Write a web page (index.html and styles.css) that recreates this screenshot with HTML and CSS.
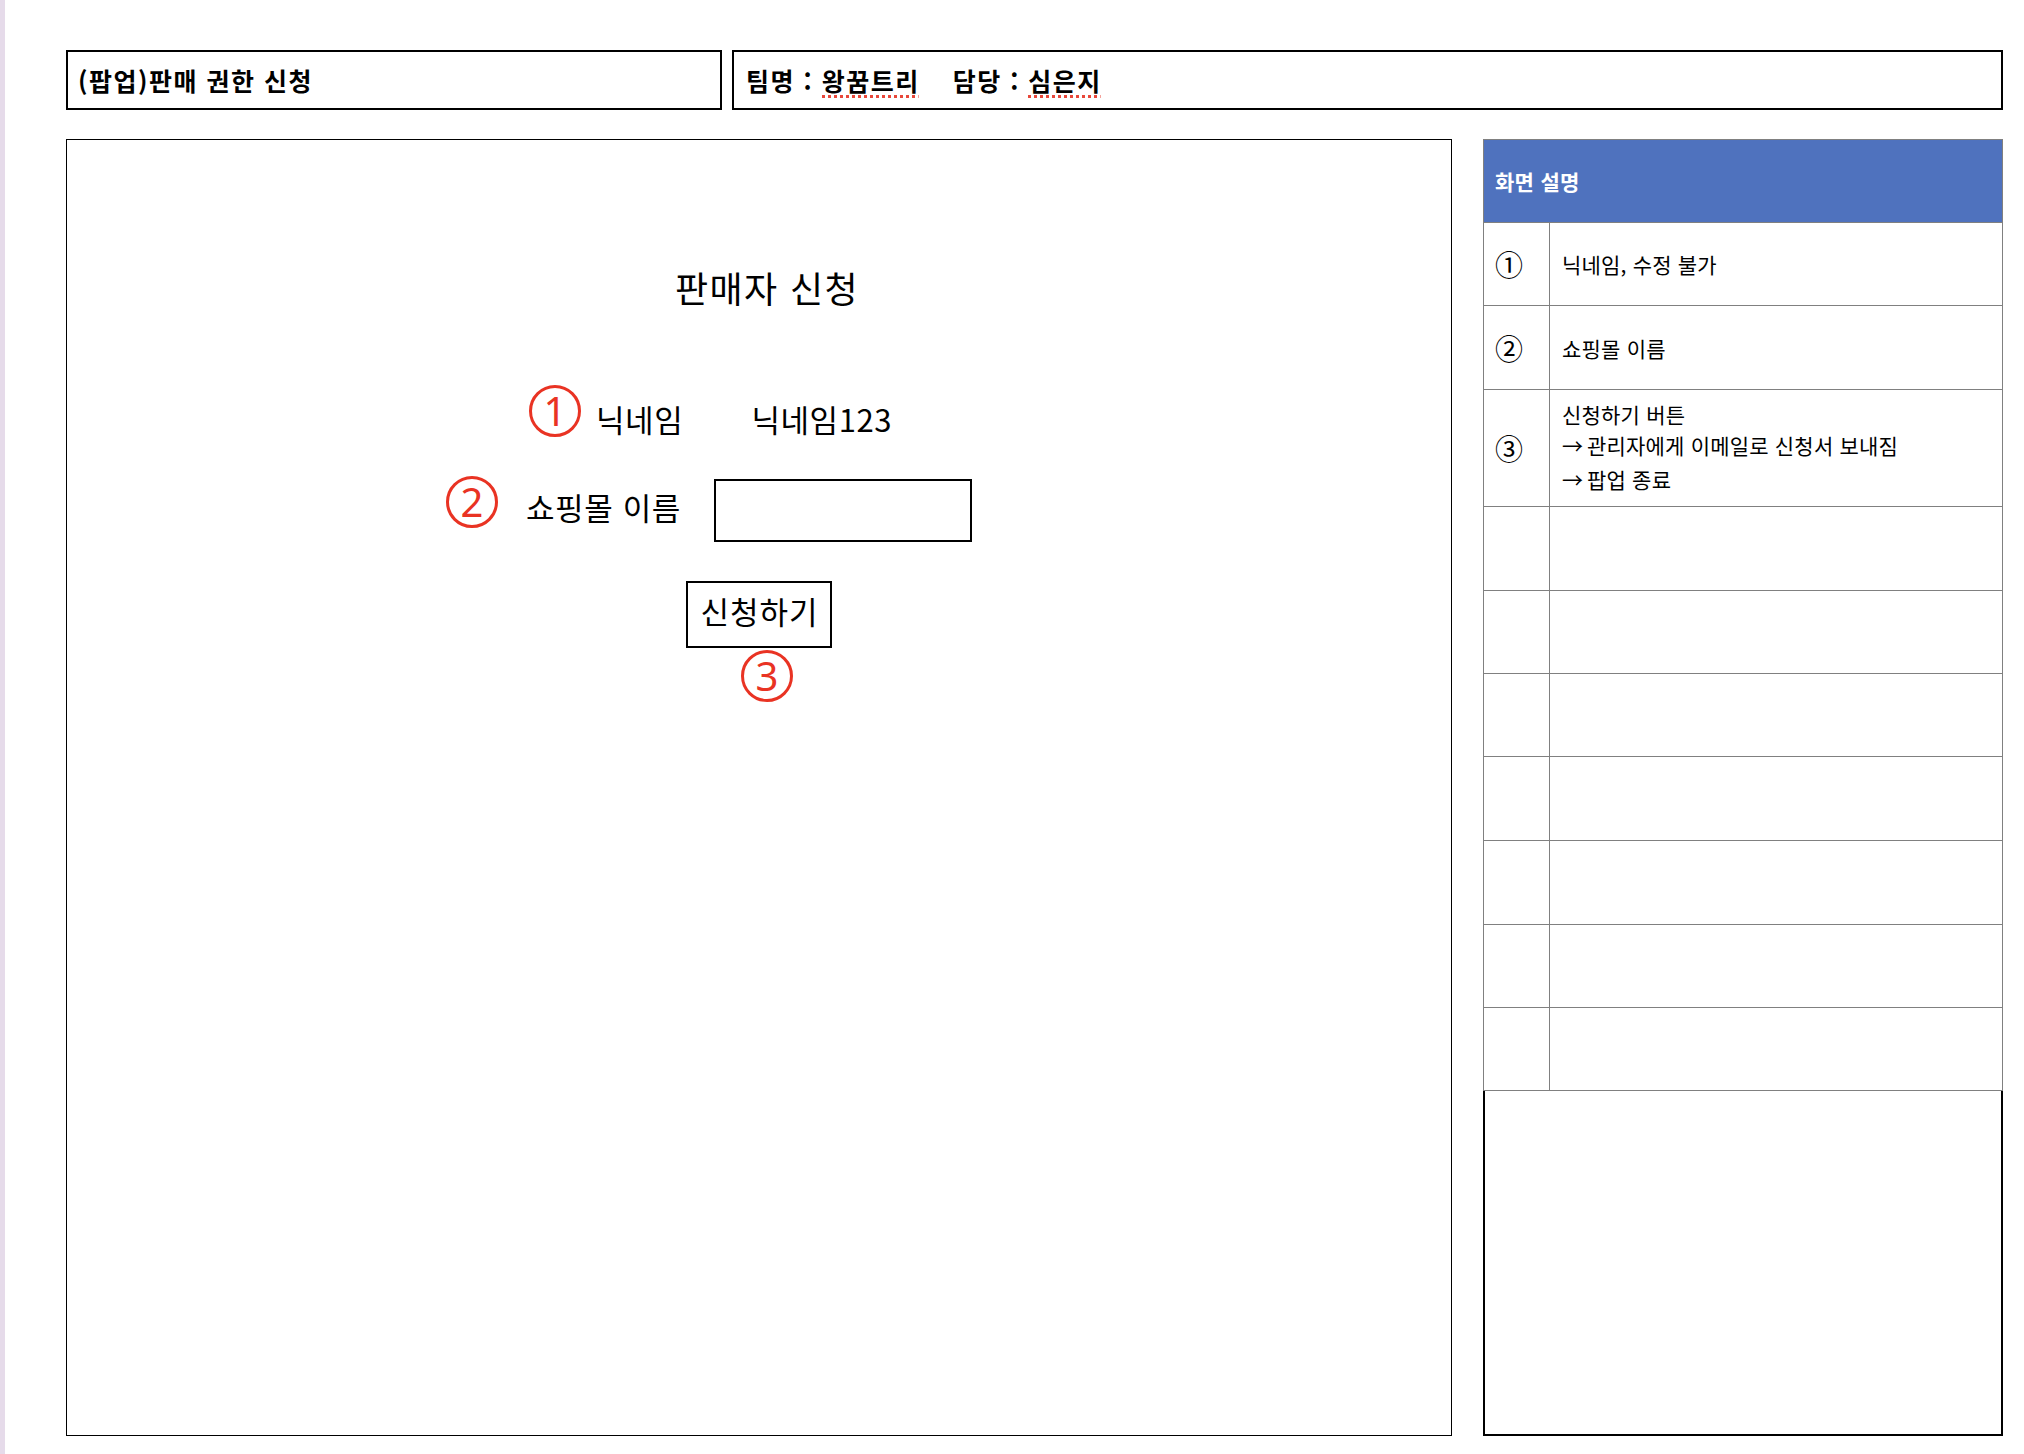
FILE: index.html
```html
<!DOCTYPE html>
<html lang="ko">
<head>
<meta charset="utf-8">
<title>(팝업)판매 권한 신청</title>
<link rel="stylesheet" href="styles.css">
</head>
<body>
<div class="page">
  <div class="top">
    <div class="hbox hbox-title">(팝업)판매 권한 신청</div>
    <div class="hbox hbox-info"><span>팀명 : <span class="spell">왕꿈트리</span></span><span class="gap">담당 : <span class="spell">심은지</span></span></div>
  </div>
  <div class="main">
    <div class="canvas">
      <div class="title">판매자 신청</div>
      <div class="row row1">
        <div class="mark">1</div>
        <div class="label">닉네임</div>
        <div class="value">닉네임123</div>
      </div>
      <div class="row row2">
        <div class="mark">2</div>
        <div class="label">쇼핑몰 이름</div>
        <div class="field"></div>
      </div>
      <div class="btn">신청하기</div>
      <div class="mark mark3">3</div>
    </div>
    <div class="panel">
      <div class="ptable">
        <div class="phead">화면 설명</div>
        <div class="prow h83"><div class="pnum">①</div><div class="ptext">닉네임, 수정 불가</div></div>
        <div class="prow h84"><div class="pnum">②</div><div class="ptext">쇼핑몰 이름</div></div>
        <div class="prow h117"><div class="pnum">③</div><div class="ptext multi"><div class="l1">신청하기 버튼</div><div class="l2"><span class="arrow">→</span>관리자에게 이메일로 신청서 보내짐</div><div class="l3"><span class="arrow">→</span>팝업 종료</div></div></div>
        <div class="prow h84"><div class="pnum"></div><div class="ptext"></div></div>
        <div class="prow h83"><div class="pnum"></div><div class="ptext"></div></div>
        <div class="prow h83"><div class="pnum"></div><div class="ptext"></div></div>
        <div class="prow h84"><div class="pnum"></div><div class="ptext"></div></div>
        <div class="prow h84"><div class="pnum"></div><div class="ptext"></div></div>
        <div class="prow h83"><div class="pnum"></div><div class="ptext"></div></div>
        <div class="prow h83"><div class="pnum"></div><div class="ptext"></div></div>
      </div>
      <div class="pfill"></div>
    </div>
  </div>
</div>
</body>
</html>
```

FILE: styles.css
```css
* { box-sizing: border-box; }
html, body { margin: 0; padding: 0; background: #fff; }
body {
  font-family: "Noto Sans CJK KR", "Noto Sans", sans-serif;
  color: #000;
}
.page {
  width: 2024px;
  height: 1454px;
  border-left: 5px solid #e6dbea;
  padding: 50px 21px 0 61px;
}
.top {
  display: flex;
  gap: 10px;
  height: 60px;
}
.hbox {
  border: 2px solid #000;
  height: 60px;
  display: flex;
  align-items: center;
  font-weight: 700;
  font-size: 25px;
  line-height: 36px;
  letter-spacing: 1.5px;
  white-space: nowrap;
}
.hbox-title { width: 656px; padding-left: 10px; }
.hbox-info { flex: 1; padding-left: 12px; }
.gap { margin-left: 33px; }
.spell {
  background: repeating-linear-gradient(to right, #e8473a 0 3px, transparent 3px 6px) left bottom / calc(100% - 1.5px) 3px no-repeat;
}
.main {
  display: flex;
  gap: 31px;
  margin-top: 29px;
  height: 1297px;
}
.canvas {
  width: 1386px;
  border: 1px solid #000;
  display: flex;
  flex-direction: column;
  align-items: flex-start;
}
.title {
  margin-top: 127px;
  margin-left: 608px;
  font-size: 36px;
  line-height: 40px;
  letter-spacing: 1.4px;
  white-space: nowrap;
}
.row {
  display: flex;
  align-items: flex-start;
  white-space: nowrap;
}
.mark {
  width: 52px;
  height: 52px;
  flex: none;
  border: 3px solid #e93323;
  border-radius: 50%;
  color: #e93323;
  font-family: "Noto Sans", sans-serif;
  font-size: 40px;
  line-height: 1;
  display: flex;
  align-items: center;
  justify-content: center;
}
.label, .value {
  font-size: 31px;
  line-height: 36px;
  letter-spacing: 0.6px;
}
.row1 { margin-top: 78px; }
.row1 .mark { margin-left: 462px; }
.row1 .label { margin-left: 15px; margin-top: 16px; }
.row1 .value { margin-left: 68px; margin-top: 16px; }
.row2 { margin-top: 39px; }
.row2 .mark { margin-left: 379px; }
.row2 .label { margin-left: 28px; margin-top: 13px; }
.field {
  margin-left: 33px;
  margin-top: 3px;
  width: 258px;
  height: 63px;
  border: 2px solid #000;
}
.btn {
  margin-top: 39px;
  margin-left: 619px;
  width: 146px;
  height: 67px;
  border: 2px solid #000;
  font-size: 31px;
  line-height: 36px;
  letter-spacing: 1px;
  display: flex;
  align-items: center;
  justify-content: center;
  padding: 0 0 8px 1px;
  white-space: nowrap;
}
.mark3 {
  margin-top: 2px;
  margin-left: 674px;
}
.panel {
  width: 520px;
  display: flex;
  flex-direction: column;
}
.ptable {
  border: 1px solid #808080;
  border-bottom: none;
}
.phead {
  height: 83px;
  border-bottom: 1px solid #808080;
  background: #4f72be;
  color: #fff;
  font-size: 21px;
  font-weight: 700;
  letter-spacing: 0.3px;
  padding-left: 11px;
  display: flex;
  align-items: center;
}
.prow {
  display: grid;
  grid-template-columns: 66px 1fr;
  border-bottom: 1px solid #808080;
}
.h83 { height: 83px; }
.h84 { height: 84px; }
.h117 { height: 117px; }
.pnum {
  border-right: 1px solid #808080;
  font-size: 28px;
  line-height: 1;
  padding-left: 11px;
  display: flex;
  align-items: center;
}
.ptext {
  font-size: 21px;
  line-height: 30px;
  letter-spacing: 0.2px;
  padding-left: 12px;
  display: flex;
  align-items: center;
  white-space: nowrap;
}
.ptext.multi {
  flex-direction: column;
  align-items: flex-start;
  justify-content: center;
}
.ptext .l1 { line-height: 30px; }
.ptext .l2 { line-height: 32px; }
.ptext .l3 { line-height: 36px; }
.arrow {
  display: inline-block;
  width: 25px;
  letter-spacing: 0;
}
.pfill {
  flex: 1;
  border: 2px solid #000;
  border-top: none;
}
```
